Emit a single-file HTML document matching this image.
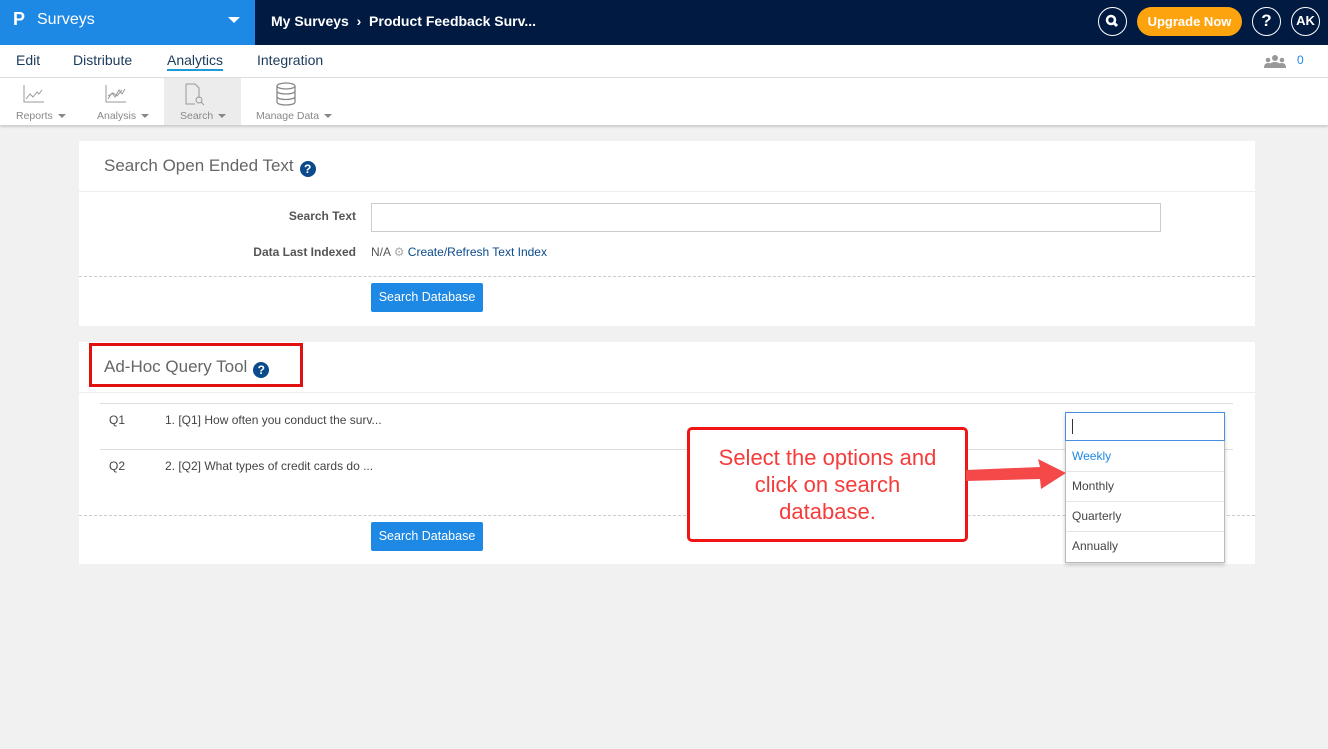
<!DOCTYPE html>
<html><head><meta charset="utf-8"><style>
*{box-sizing:border-box;margin:0;padding:0}
body{width:1328px;height:749px;background:#f1f1f1;font-family:"Liberation Sans",sans-serif;position:relative;overflow:hidden;color:#444}
.abs{position:absolute}
.top{left:0;top:0;width:1328px;height:45px;background:#001a42}
.brand{left:0;top:0;width:255px;height:45px;background:#1e88e5;color:#fff}
.nav{left:0;top:45px;width:1328px;height:33px;background:#fff;border-bottom:1px solid #ddd}
.nav span{position:absolute;top:7px;font-size:14px;color:#1a3a5c}
.tb{left:0;top:78px;width:1328px;height:47px;background:#fff;box-shadow:0 2px 2px rgba(0,0,0,.15)}
.tb .lbl{position:absolute;top:32px;font-size:10.5px;color:#888}
.caret{display:inline-block;width:0;height:0;border-left:4px solid transparent;border-right:4px solid transparent;border-top:4px solid #888;margin-left:5px;vertical-align:middle}
.card{background:#fff;left:79px;width:1176px}
.h{font-size:17px;color:#666;font-weight:normal}
.q{display:inline-block;width:16px;height:16px;border-radius:50%;background:#0b4a8b;color:#fff;font-size:12px;font-weight:bold;text-align:center;line-height:16px;vertical-align:-2px;margin-left:6px}
.btn{background:#1e88e5;color:#fff;font-size:12.5px;border-radius:2px;width:112px;height:29px;line-height:29px;text-align:center}
.s{font-size:12px}
</style></head><body>
<div class="abs top"></div>
<div class="abs brand">
 <div class="abs" style="left:13px;top:9px;font-size:18px;font-weight:bold">P</div>
 <div class="abs" style="left:37px;top:11px;font-size:16px">Surveys</div>
 <div class="abs" style="left:228px;top:17px;border-left:6px solid transparent;border-right:6px solid transparent;border-top:6px solid #fff"></div>
</div>
<div class="abs" style="left:271px;top:13px;color:#fff;font-size:14px;font-weight:bold">My Surveys&nbsp;&nbsp;›&nbsp;&nbsp;Product Feedback Surv...</div>
<div class="abs" style="left:1098px;top:7px;width:29px;height:29px;border:1.5px solid #fff;border-radius:50%"><svg width="26" height="26" viewBox="0 0 26 26"><circle cx="12" cy="12" r="4" stroke="#fff" stroke-width="2.5" fill="none"/><line x1="15" y1="15" x2="18" y2="18" stroke="#fff" stroke-width="3"/></svg></div>
<div class="abs" style="left:1137px;top:7px;width:105px;height:29px;background:#fda30e;border-radius:15px;color:#fff;font-size:13px;font-weight:bold;text-align:center;line-height:29px">Upgrade Now</div>
<div class="abs" style="left:1252px;top:7px;width:29px;height:29px;border:1.5px solid #fff;border-radius:50%;color:#fff;font-weight:bold;font-size:17px;text-align:center;line-height:26px">?</div>
<div class="abs" style="left:1291px;top:7px;width:29px;height:29px;border:1.5px solid #fff;border-radius:50%;color:#fff;font-weight:bold;font-size:13px;text-align:center;line-height:26px">AK</div>
<div class="abs nav">
 <span style="left:16px">Edit</span><span style="left:73px">Distribute</span>
 <span style="left:167px;border-bottom:2px solid #1e9ad6;padding-bottom:1px">Analytics</span><span style="left:257px">Integration</span>
 <svg class="abs" style="left:1264px;top:9px" width="22" height="14" viewBox="0 0 22 14"><g fill="#999"><circle cx="11" cy="4" r="3"/><circle cx="4" cy="6" r="2.3"/><circle cx="18" cy="6" r="2.3"/><path d="M5 14q0-6 6-6t6 6z"/><path d="M0 14q0-5 4-5t3 2l-1 3z"/><path d="M22 14q0-5-4-5t-3 2l1 3z"/></g></svg>
 <span style="left:1297px;top:8px;font-size:12px;color:#1e88e5">0</span>
</div>
<div class="abs tb">
 <div class="abs" style="left:164px;top:0;width:77px;height:47px;background:#ececec"></div>
 <svg class="abs" style="left:22px;top:6px" width="24" height="20"><path d="M2 1V18H22M4 15l4-5 3 3 4-5 2 2 3-4" stroke="#999" fill="none"/></svg>
 <svg class="abs" style="left:104px;top:6px" width="24" height="20"><path d="M2 1V18H22M4 15l4-6 3 4 4-7 3 4 3-5M4 12l5-3 4 3 5-6" stroke="#999" fill="none"/></svg>
 <svg class="abs" style="left:182px;top:4px" width="26" height="26"><path d="M4 2h9l4 4v10M4 2v20h9" stroke="#999" fill="none"/><circle cx="17" cy="18" r="3" stroke="#999" fill="none"/><path d="M19 20l3 3" stroke="#999"/></svg>
 <svg class="abs" style="left:274px;top:3px" width="24" height="26"><g stroke="#888" fill="none" stroke-width="1.3"><ellipse cx="12" cy="5" rx="9" ry="3"/><path d="M3 5v16c0 4 18 4 18 0V5M3 10c0 4 18 4 18 0M3 15.5c0 4 18 4 18 0"/></g></svg>
 <span class="lbl" style="left:16px">Reports<i class="caret"></i></span>
 <span class="lbl" style="left:97px">Analysis<i class="caret"></i></span>
 <span class="lbl" style="left:180px">Search<i class="caret"></i></span>
 <span class="lbl" style="left:256px">Manage Data<i class="caret"></i></span>
</div>

<div class="abs card" style="top:141px;height:185px">
 <div class="abs h" style="left:25px;top:15px">Search Open Ended Text<span class="q">?</span></div>
 <div class="abs" style="left:0;top:50px;width:1176px;border-top:1px solid #eee"></div>
 <div class="abs s" style="left:0;width:277px;top:68px;text-align:right;font-weight:bold;color:#555">Search Text</div>
 <div class="abs" style="left:292px;top:62px;width:790px;height:29px;border:1px solid #ccc"></div>
 <div class="abs s" style="left:0;width:277px;top:104px;text-align:right;font-weight:bold;color:#555">Data Last Indexed</div>
 <div class="abs s" style="left:292px;top:104px;color:#555">N/A <span style="color:#aaa">⚙</span> <span style="color:#0b4a8b">Create/Refresh Text Index</span></div>
 <div class="abs" style="left:0;top:135px;width:1176px;border-top:1px dashed #ccc"></div>
 <div class="abs btn" style="left:292px;top:142px">Search Database</div>
</div>

<div class="abs card" style="top:342px;height:222px">
 <div class="abs h" style="left:25px;top:15px">Ad-Hoc Query Tool<span class="q">?</span></div>
 <div class="abs" style="left:10px;top:1px;width:214px;height:44px;border:3px solid #e01010"></div>
 <div class="abs" style="left:0;top:50px;width:1176px;border-top:1px solid #eee"></div>
 <div class="abs" style="left:21px;top:61px;width:1133px;border-top:1px solid #ddd"></div>
 <div class="abs s" style="left:30px;top:71px">Q1</div>
 <div class="abs s" style="left:86px;top:71px">1. [Q1] How often you conduct the surv...</div>
 <div class="abs" style="left:21px;top:107px;width:1133px;border-top:1px solid #ddd"></div>
 <div class="abs s" style="left:30px;top:117px">Q2</div>
 <div class="abs s" style="left:86px;top:117px">2. [Q2] What types of credit cards do ...</div>
 <div class="abs" style="left:0;top:173px;width:1176px;border-top:1px dashed #ccc"></div>
 <div class="abs btn" style="left:292px;top:180px">Search Database</div>
</div>

<div class="abs" style="left:1065px;top:412px;width:160px;height:151px;background:#fff;border:1px solid #bbb;box-shadow:0 2px 4px rgba(0,0,0,.2)">
 <div class="abs" style="left:-1px;top:-1px;width:160px;height:29px;border:1px solid #4a90e2"><div class="abs" style="left:6px;top:6px;width:1px;height:15px;background:#333"></div></div>
 <div class="abs s" style="left:6px;top:36px;color:#1e88e5">Weekly</div>
 <div class="abs" style="left:0;top:58px;width:158px;border-top:1px solid #e5e5e5"></div>
 <div class="abs s" style="left:6px;top:66px">Monthly</div>
 <div class="abs" style="left:0;top:88px;width:158px;border-top:1px solid #e5e5e5"></div>
 <div class="abs s" style="left:6px;top:96px">Quarterly</div>
 <div class="abs" style="left:0;top:118px;width:158px;border-top:1px solid #e5e5e5"></div>
 <div class="abs s" style="left:6px;top:126px">Annually</div>
</div>

<div class="abs" style="left:687px;top:427px;width:281px;height:115px;border:3px solid #f01414;border-radius:5px;background:#fff;color:#f63b3b;font-size:22px;text-align:center;line-height:27px;padding-top:14px">Select the options and<br>click on search<br>database.</div>
<svg class="abs" style="left:966px;top:458px" width="102" height="34"><path d="M0 12L74 9 72 1 100 15 75 31 74 21 0 23z" fill="#f54848"/></svg>
</body></html>
